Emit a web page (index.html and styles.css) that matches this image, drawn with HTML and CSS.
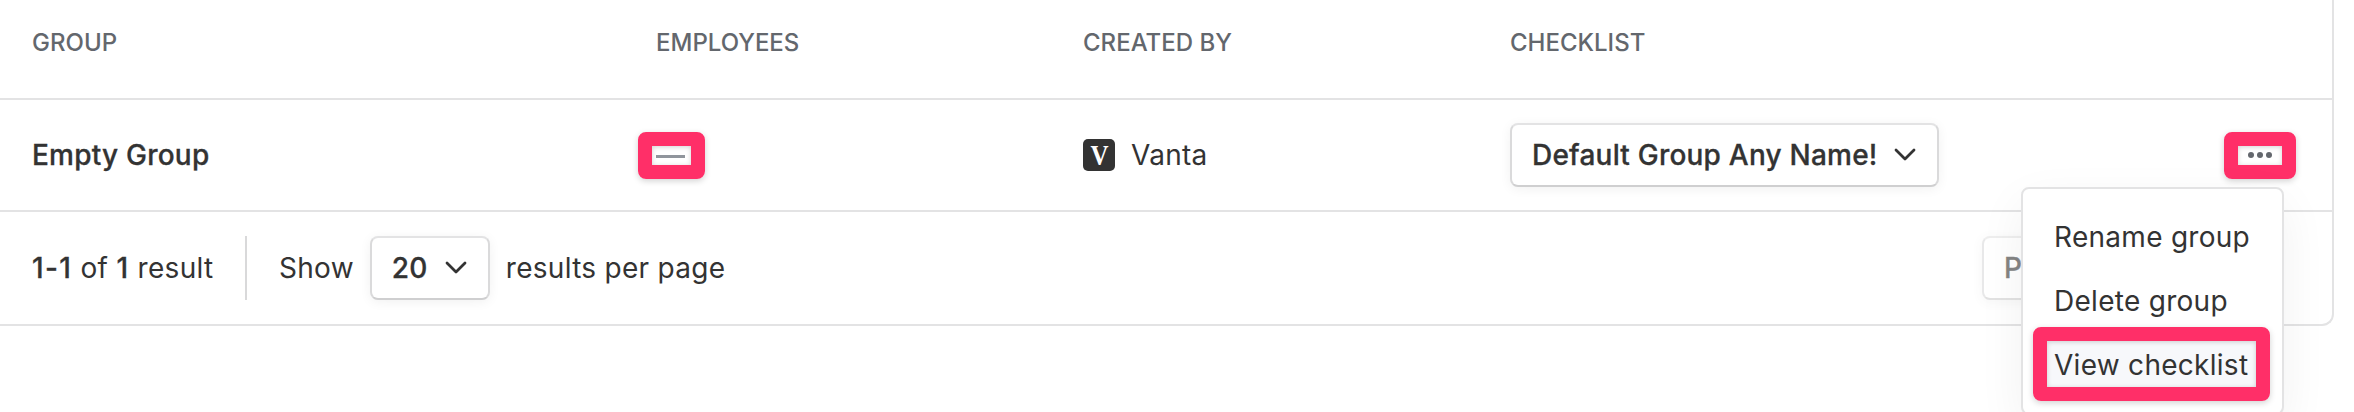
FILE: index.html
```html
<!DOCTYPE html>
<html lang="en">
<head>
    <meta charset="UTF-8">
    <meta name="viewport" content="width=device-width, initial-scale=1.0">
    <title>Groups</title>
    <link rel="stylesheet" href="styles.css">
</head>
<body>
    <div class="table">
        <div class="row header">
            <div>GROUP</div>
            <div>EMPLOYEES</div>
            <div>CREATED BY</div>
            <div>CHECKLIST</div>
            <div></div>
        </div>
        <div class="row">
            <div class="group-name">Empty Group</div>
            <div class="employees">
                <span class="dash"></span>
                <span class="highlight highlight-employees"></span>
            </div>
            <div class="created-by">
                <span class="logo"><span class="logo-letter">V</span></span>
                <span>Vanta</span>
            </div>
            <div>
                <button class="select select-checklist">
                    <span>Default Group Any Name!</span>
                    <svg class="chevron" width="22" height="14" viewBox="0 0 22 14"><path d="M2 2l9 9 9-9"/></svg>
                </button>
            </div>
            <div class="actions">
                <svg class="dots" width="24" height="6" viewBox="0 0 24 6">
                    <circle cx="3" cy="3" r="3"/>
                    <circle cx="12" cy="3" r="3"/>
                    <circle cx="21" cy="3" r="3"/>
                </svg>
                <span class="highlight highlight-dots"></span>
                <div class="menu">
                    <div class="menu-item">Rename group</div>
                    <div class="menu-item">Delete group</div>
                    <div class="menu-item active">View checklist<span class="highlight highlight-item"></span></div>
                </div>
            </div>
        </div>
        <div class="footer">
            <div class="count"><b>1-1</b> of <b>1</b> result</div>
            <div class="divider"></div>
            <span class="show">Show</span>
            <button class="select select-size">
                <span>20</span>
                <svg class="chevron" width="22" height="14" viewBox="0 0 22 14"><path d="M2 2l9 9 9-9"/></svg>
            </button>
            <span class="per-page">results per page</span>
            <button class="select prev" disabled>Previous</button>
        </div>
    </div>
</body>
</html>
```
FILE: styles.css
```css
* {
    box-sizing: border-box;
}

body {
    margin: 0;
    height: 412px;
    overflow: hidden;
    background: #fff;
    color: #333;
    font-family: Inter, sans-serif;
    font-size: 28px;
    line-height: 40px;
    letter-spacing: 0.28px;
}

.table {
    width: 2334px;
    height: 326px;
    border-right: 2px solid #e3e3e4;
    border-bottom: 2px solid #e3e3e4;
    border-bottom-right-radius: 12px;
}

.row {
    display: grid;
    grid-template-columns: 624px 427px 427px 536px 1fr;
    align-items: center;
    height: 112px;
    padding-left: 32px;
    border-bottom: 2px solid #e3e3e4;
}

.header {
    height: 100px;
    padding-bottom: 12px;
    color: #63676d;
    font-size: 24px;
    font-weight: 500;
    letter-spacing: 0;
}

/* slight stroke sits the medium weight between 500 and 600 */
.group-name,
.select,
.count b {
    font-weight: 500;
    -webkit-text-stroke: 0.3px currentColor;
}

.group-name {
    letter-spacing: 0.22px;
}

.employees {
    position: relative;
    display: flex;
    align-items: center;
    height: 40px;
}

.dash {
    width: 29px;
    height: 3px;
    margin-top: 2px;
    background: #90959c;
}

.highlight {
    position: absolute;
    border: 14px solid #ff2f68;
    border-radius: 8px;
    box-shadow: 0 2px 6px rgba(0, 0, 0, 0.18), inset 0 1px 5px rgba(0, 0, 0, 0.18);
}

.highlight-employees {
    left: -18px;
    top: -3.5px;
    width: 67px;
    height: 47px;
}

.created-by {
    display: flex;
    align-items: center;
    gap: 16px;
}

.logo {
    display: flex;
    align-items: center;
    justify-content: center;
    width: 32px;
    height: 32px;
    border-radius: 5px;
    background: #333;
}

.logo-letter {
    color: #fff;
    font: bold 29px/32px "Liberation Serif", serif;
    letter-spacing: 0;
    transform: scaleX(0.86);
}

.select {
    display: flex;
    align-items: center;
    justify-content: space-between;
    height: 64px;
    padding: 0 21px;
    border: 2px solid;
    border-color: #e3e3e4 #dadadb #cfcfd0;
    border-radius: 8px;
    background: #fff;
    box-shadow: 0 2px 12px rgba(0, 0, 0, 0.06);
    color: #333;
    font-family: inherit;
    font-size: 28px;
    line-height: 40px;
    letter-spacing: 0.22px;
    white-space: nowrap;
}

.select-checklist {
    width: 429px;
    padding-left: 20px;
}

.select-size {
    width: 120px;
    margin-left: 16px;
    padding-left: 20px;
}

.chevron {
    fill: none;
    stroke: #333;
    stroke-width: 2.8;
    stroke-linecap: round;
    stroke-linejoin: round;
}

.actions {
    position: relative;
    display: flex;
    align-items: center;
    height: 40px;
    padding-left: 202px;
}

.dots {
    fill: #63676d;
}

.highlight-dots {
    left: 178px;
    top: -3.5px;
    width: 72px;
    height: 47px;
}

.menu {
    position: absolute;
    z-index: 1;
    top: 52px;
    right: 48px;
    width: 263px;
    height: 228px;
    padding: 16px 0;
    border: 2px solid #e3e3e4;
    border-radius: 8px;
    background: #fff;
    box-shadow: 0 16px 48px rgba(0, 0, 0, 0.06);
}

.menu-item {
    position: relative;
    height: 64px;
    padding: 0 31px;
    line-height: 64px;
    white-space: nowrap;
}

.menu-item.active {
    background: linear-gradient(#f7f8fb, #f7f8fb) 24px 0 / 209px 100% no-repeat;
}

.highlight-item {
    left: 9.5px;
    top: -6.5px;
    width: 237.5px;
    height: 74.5px;
}

.footer {
    display: flex;
    align-items: center;
    height: 112px;
    padding-left: 32px;
}

.count {
    width: 181px;
    white-space: nowrap;
}

.count b {
    letter-spacing: 1.4px;
}

.divider {
    width: 2px;
    height: 64px;
    margin: 0 32px;
    background: #d9d9da;
}

.per-page {
    margin-left: 16px;
}

.prev {
    width: 170px;
    margin-left: auto;
    margin-right: 180px;
    padding-left: 20px;
    opacity: 0.6;
}
```
